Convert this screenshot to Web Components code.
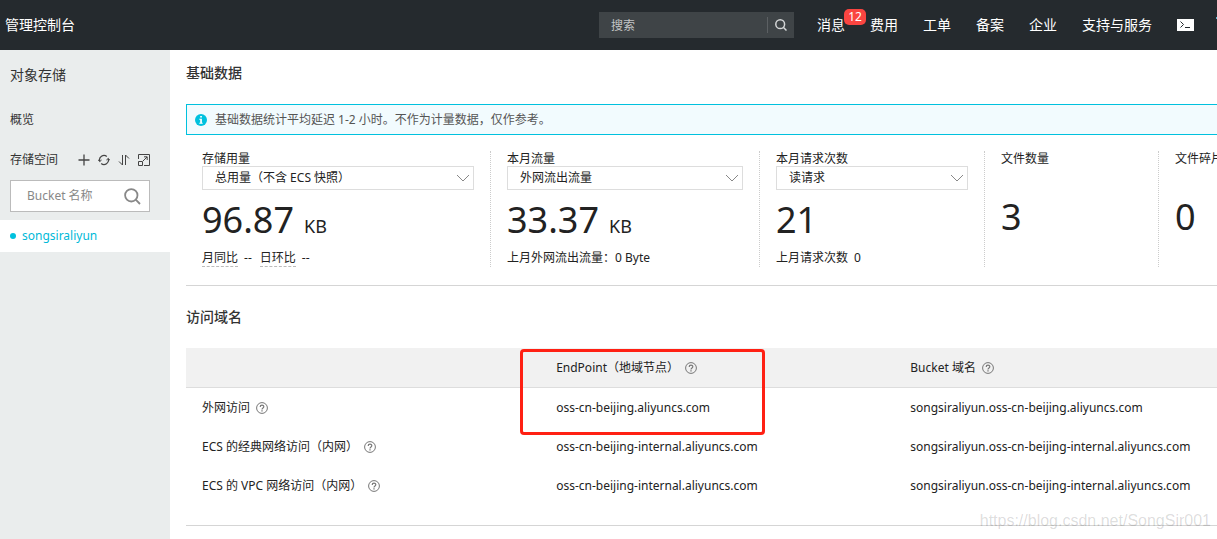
<!DOCTYPE html>
<html lang="zh-CN">
<head>
<meta charset="utf-8">
<meta name="viewport" content="width=device-width, initial-scale=1">
<title>管理控制台</title>
<style>
  html, body { margin: 0; height: 100%; }
  body { font: 12px/20px "Noto Sans", "Noto Sans CJK SC", sans-serif; color: #222; background: #fff; overflow: hidden; }
</style>
</head>
<body>
<console-app></console-app>
<script>
const define = (name, html, setup) => {
  const template = document.createElement('template');
  template.innerHTML = html;
  customElements.define(name, class extends HTMLElement {
    constructor() {
      super();
      this.attachShadow({ mode: 'open' }).append(template.content.cloneNode(true));
    }
    connectedCallback() { if (setup) setup(this, this.shadowRoot); }
  });
};

define('help-tip', `
<style>
  :host { display: inline-flex; vertical-align: middle; margin-left: 6px; }
  button { display: flex; padding: 0; border: 0; background: none; color: #777; }
</style>
<button type="button" aria-label="帮助">
  <svg width="12" height="12" viewBox="0 0 12 12" fill="none" stroke="currentColor">
    <circle cx="6" cy="6" r="5.4"/>
    <path d="M4.2 4.9C4.2 2.6 7.8 2.6 7.8 4.8C7.8 5.9 6 6 6 7.4" stroke-width="1.2"/>
    <path d="M6 8.3V9.5" stroke-width="1.3"/>
  </svg>
</button>`);

define('console-search', `
<style>
  :host { display: block; flex: 0 0 195px; min-width: 0; }
  form { display: flex; align-items: center; height: 26px; background: #3f4447; }
  input { flex: 1; width: 100%; min-width: 0; height: 26px; box-sizing: border-box; padding: 0 12px; border: 0; background: none; color: #ccc; font: inherit; outline: 0; }
  input::placeholder { color: #c3c5c6; opacity: 1; }
  button { display: flex; align-items: center; justify-content: center; flex: none; width: 27px; height: 16px; padding: 0; border: 0; border-left: 1px solid #5c6063; background: none; color: #d4d6d7; }
</style>
<form role="search" onsubmit="return false">
  <input type="text" placeholder="搜索" aria-label="搜索">
  <button type="submit" aria-label="搜索">
    <svg width="12" height="12" viewBox="0 0 12 12" fill="none" stroke="currentColor" stroke-width="1.5"><circle cx="5.2" cy="5.2" r="4.4"/><path d="M8.3 8.3L11.5 11.5"/></svg>
  </button>
</form>`);

define('console-header', `
<style>
  :host { display: flex; align-items: center; position: relative; height: 50px; padding: 0 23px 0 5px; background: #252a2e; color: #fff; font-size: 14px; white-space: nowrap; }
  :host::after { content: ""; position: absolute; right: 0; top: 17px; width: 1px; height: 2px; background: #5cb4d0; }
  a { color: inherit; text-decoration: none; position: relative; }
  .brand { flex: 1; }
  console-search { font-size: 12px; }
  nav { display: flex; align-items: center; gap: 25px; margin-left: 23px; }
  .badge { position: absolute; left: 27px; top: -6px; width: 22px; border-radius: 5px; background: #fa4541; font-size: 12px; line-height: 16px; text-align: center; }
  svg { display: block; }
</style>
<a class="brand" href="#">管理控制台</a>
<console-search></console-search>
<nav>
  <a href="#">消息<span class="badge">12</span></a>
  <a href="#">费用</a><a href="#">工单</a><a href="#">备案</a><a href="#">企业</a><a href="#">支持与服务</a>
  <a href="#" aria-label="云命令行"><svg width="17" height="12" viewBox="0 0 17 12"><path fill="#fff" d="M0 0H17V12H0Z"/><path d="M3.5 2.5L6.5 5.5L3.5 8.5M8 8.5H13" fill="none" stroke="#252a2e"/></svg></a>
</nav>`);

define('side-nav', `
<style>
  :host { display: block; flex: 0 0 170px; min-width: 0; background: #eaeded; color: #333; }
  h1 { margin: 0; padding: 0 10px; font-size: 14px; font-weight: 400; line-height: 50px; }
  a { color: inherit; text-decoration: none; }
  .row { display: flex; align-items: center; height: 40px; padding: 0 10px; }
  .row span { flex: 1; }
  .tools { display: flex; gap: 8px; padding-right: 10px; }
  .tools button { padding: 0; border: 0; background: none; color: #444; display: flex; }
  form { display: flex; align-items: center; box-sizing: border-box; height: 32px; margin: 0 20px 8px 10px; padding: 0 8px 0 16px; border: 1px solid #bbb; background: #fff; }
  input { flex: 1; width: 100%; min-width: 0; padding: 0; border: 0; font: inherit; background: none; outline: 0; }
  input::placeholder { color: #888; opacity: 1; }
  form button { display: flex; flex: none; padding: 0; border: 0; background: none; color: #888; }
  .bucket { display: flex; align-items: center; gap: 6px; height: 32px; padding: 0 10px; background: #fff; color: #00b9d8; }
  .bucket::before { content: ""; width: 6px; height: 6px; border-radius: 50%; background: #00c1de; }
  svg { fill: none; stroke: currentColor; }
</style>
<h1>对象存储</h1>
<a class="row" href="#">概览</a>
<div class="row"><span>存储空间</span>
  <div class="tools">
    <button type="button" aria-label="新建"><svg width="12" height="12" viewBox="0 0 12 12" stroke-width="1.3"><path d="M6 .5V11.5M.5 6H11.5"/></svg></button>
    <button type="button" aria-label="刷新"><svg width="12" height="12" viewBox="0 0 12 12" stroke-width="1.3"><path d="M1.7 7.2A4.5 4.5 0 0 1 8.8 2.4M10.3 4.8A4.5 4.5 0 0 1 3.2 9.6"/><path d="M0 5.6L1.7 7.6L3.6 6M12 6.4L10.3 4.4L8.4 6" stroke-width="1"/></svg></button>
    <button type="button" aria-label="排序"><svg width="12" height="12" viewBox="0 0 12 12"><path d="M4.5 1V11L1 7.5M7.5 11V1L11 4.5"/></svg></button>
    <button type="button" aria-label="展开"><svg width="12" height="12" viewBox="0 0 12 12" stroke="#666"><path d="M.5 5V.5H11.5V11.5H6M.5 7.5H4.5V11.5H.5ZM5 7L9 3M6 2.8H9.2V6"/></svg></button>
  </div>
</div>
<form role="search" onsubmit="return false">
  <input type="text" placeholder="Bucket 名称" aria-label="Bucket 名称">
  <button type="submit" aria-label="搜索"><svg width="17" height="17" viewBox="0 0 17 17" stroke-width="1.8"><circle cx="7.3" cy="7.3" r="6.2"/><path d="M11.7 11.7L16 16"/></svg></button>
</form>
<a class="bucket" href="#">songsiraliyun</a>`);

define('info-alert', `
<style>
  :host { display: flex; align-items: center; gap: 8px; box-sizing: border-box; height: 31px; padding: 0 8px; border: 1px solid #00c1de; border-right: 0; background: #f2fbfe; color: #555; }
</style>
<svg width="12" height="12" viewBox="0 0 12 12"><circle cx="6" cy="6" r="6" fill="#00c1de"/><path d="M5.2 2H6.9V3.6H5.2ZM4.3 4.8H6.9V8.7H7.7V9.7H4.3V8.7H5.2V5.8H4.3Z" fill="#fff"/></svg>
<span><slot></slot></span>`);

define('stat-select', `
<style>
  :host { display: grid; align-items: center; height: 24px; }
  select, svg { grid-area: 1 / 1; }
  select { appearance: none; width: 100%; height: 24px; padding: 0 24px 0 12px; border: 1px solid #ddd; border-radius: 0; background: #fff; color: inherit; font: inherit; outline: 0; }
  svg { justify-self: end; margin-right: 4px; pointer-events: none; }
</style>
<select></select>
<svg width="14" height="8" viewBox="0 0 14 8" fill="none" stroke="#888"><path d="M1 1L7 7L13 1"/></svg>`,
(host, root) => {
  const select = root.querySelector('select');
  select.setAttribute('aria-label', host.getAttribute('label'));
  select.replaceChildren(new Option(host.getAttribute('value')));
});

define('stat-card', `
<style>
  :host { display: flex; flex-direction: column; min-width: 0; padding: 0 16px; border-left: 1px dotted #ccc; white-space: nowrap; }
  :host(:first-child) { border-left: 0; }
  .label { height: 15px; line-height: 15px; }
  .value { display: flex; align-items: baseline; gap: 10px; margin: 6px 0; height: 48px; line-height: 48px; font-size: 36px; }
  .unit { font-size: 18px; }
  :host([plain]) .value { margin-top: 27px; }
  .foot { display: flex; gap: 6px; line-height: 16px; }
</style>
<div class="label"></div>
<slot name="filter"></slot>
<div class="value"><span class="num"></span><span class="unit"></span></div>
<div class="foot"><slot></slot></div>`,
(host, root) => {
  root.querySelector('.label').textContent = host.getAttribute('label');
  root.querySelector('.num').textContent = host.getAttribute('value');
  const unit = host.getAttribute('unit');
  if (unit) root.querySelector('.unit').textContent = unit;
  else root.querySelector('.unit').remove();
});

define('domain-table', `
<style>
  :host { display: block; position: relative; }
  table { width: 100%; table-layout: fixed; border-collapse: separate; border-spacing: 0; white-space: nowrap; }
  col.wide { width: 34.35%; }
  th, td { height: 39px; padding: 0 0 0 16px; text-align: left; font-weight: 400; }
  thead th, thead td { background: #f1f1f1; border-bottom: 1px solid #ddd; }
  .mark { position: absolute; left: calc(34.35% - 20px); top: 1px; width: 239px; height: 80px; border: 3px solid #ff2013; border-radius: 4px; pointer-events: none; }
</style>
<table>
  <colgroup><col class="wide"><col class="wide"><col></colgroup>
  <thead><tr><td></td><th scope="col">EndPoint（地域节点）<help-tip></help-tip></th><th scope="col">Bucket 域名<help-tip></help-tip></th></tr></thead>
  <tbody>
    <tr><th scope="row">外网访问<help-tip></help-tip></th><td>oss-cn-beijing.aliyuncs.com</td><td>songsiraliyun.oss-cn-beijing.aliyuncs.com</td></tr>
    <tr><th scope="row">ECS 的经典网络访问（内网）<help-tip></help-tip></th><td>oss-cn-beijing-internal.aliyuncs.com</td><td>songsiraliyun.oss-cn-beijing-internal.aliyuncs.com</td></tr>
    <tr><th scope="row">ECS 的 VPC 网络访问（内网）<help-tip></help-tip></th><td>oss-cn-beijing-internal.aliyuncs.com</td><td>songsiraliyun.oss-cn-beijing-internal.aliyuncs.com</td></tr>
  </tbody>
</table>
<div class="mark"></div>`);

define('console-app', `
<style>
  :host { display: flex; flex-direction: column; min-height: 100%; }
  .body { display: flex; flex: 1; }
  main { flex: 1; min-width: 0; padding-left: 16px; }
  section { display: flow-root; padding-bottom: 20px; border-bottom: 1px solid #d5d5d5; }
  h2 { margin: 8px 0; font-size: 14px; line-height: 46px; font-weight: 500; color: #333; }
  section:first-child h2 { margin-top: 0; }
  .stats { display: grid; grid-template-columns: 304fr 269fr 225fr 174fr 59fr; height: 114px; margin-top: 16px; }
  .trend { border-bottom: 1px dashed #bbb; }
  .gap { margin-left: 2px; }
  .watermark { position: absolute; right: 6px; bottom: 8px; font: 16px/20px "Liberation Sans", sans-serif; color: rgba(0, 0, 0, .15); }
</style>
<console-header></console-header>
<div class="body">
  <side-nav></side-nav>
  <main>
    <section>
      <h2>基础数据</h2>
      <info-alert>基础数据统计平均延迟 1-2 小时。不作为计量数据，仅作参考。</info-alert>
      <div class="stats">
        <stat-card label="存储用量" value="96.87" unit="KB">
          <stat-select slot="filter" label="存储用量" value="总用量（不含 ECS 快照）"></stat-select>
          <span class="trend">月同比</span><span>--</span><span class="trend gap">日环比</span><span>--</span>
        </stat-card>
        <stat-card label="本月流量" value="33.37" unit="KB">
          <stat-select slot="filter" label="本月流量" value="外网流出流量"></stat-select>
          <span>上月外网流出流量：0 Byte</span>
        </stat-card>
        <stat-card label="本月请求次数" value="21">
          <stat-select slot="filter" label="本月请求次数" value="读请求"></stat-select>
          <span>上月请求次数</span><span>0</span>
        </stat-card>
        <stat-card plain label="文件数量" value="3"></stat-card>
        <stat-card plain label="文件碎片" value="0"></stat-card>
      </div>
    </section>
    <section>
      <h2>访问域名</h2>
      <domain-table></domain-table>
    </section>
  </main>
</div>
<div class="watermark">https://blog.csdn.net/SongSir001</div>`);
</script>
</body>
</html>
